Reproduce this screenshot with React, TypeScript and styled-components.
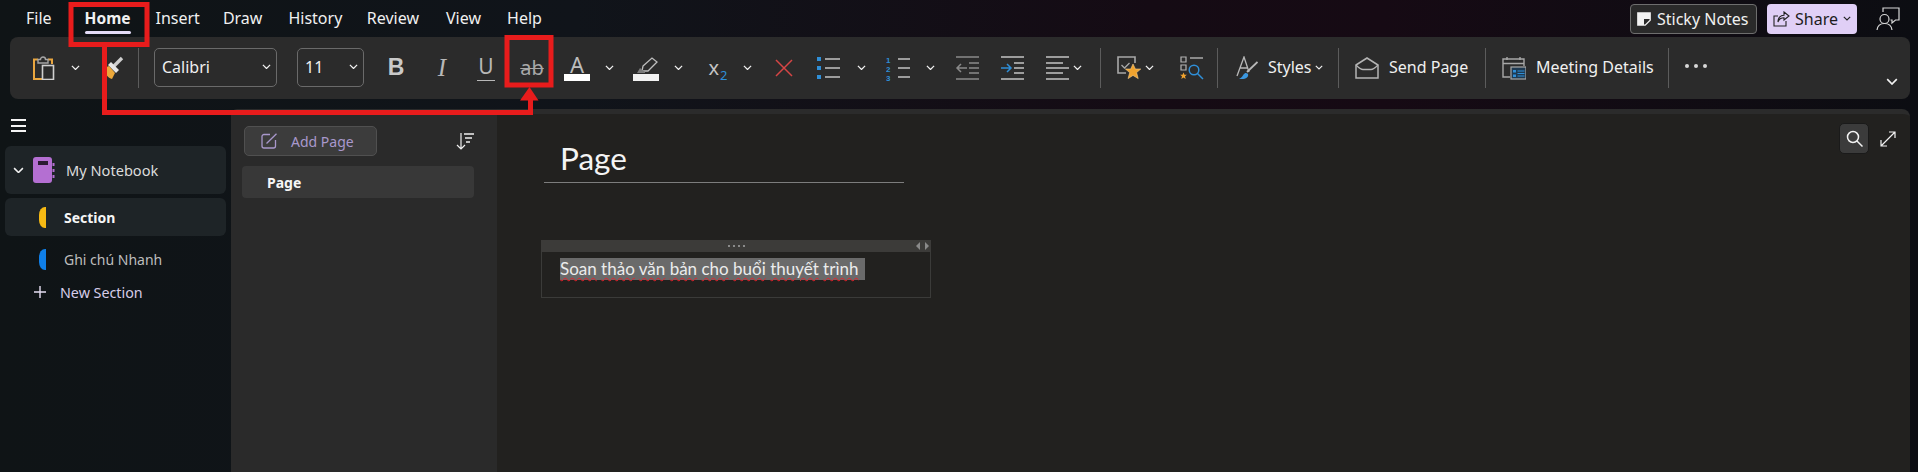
import React from 'react';
import styled, { createGlobalStyle } from 'styled-components';

const GlobalStyle = createGlobalStyle`
  html, body {
    margin: 0;
    padding: 0;
    background: #0f1315;
  }
  * {
    box-sizing: border-box;
  }
`;

const UI_FONT = `"Noto Sans", "Open Sans", sans-serif`;

const AppShell = styled.div`
  position: relative;
  width: 1918px;
  height: 472px;
  overflow: hidden;
  display: flex;
  flex-direction: column;
  font-family: ${UI_FONT};
  color: #f2f2f2;
  background: linear-gradient(90deg, #0f1416 0%, #10141a 30%, #150b14 60%, #160a14 72%, #0c0d12 100%);
`;

const MenuBar = styled.div`
  height: 37px;
  display: flex;
  align-items: center;
  flex: none;
  padding-right: 18px;
`;

const MenuItem = styled.div<{ $ml: number; $active?: boolean }>`
  position: relative;
  margin-left: ${({ $ml }) => $ml}px;
  font-size: ${({ $active }) => ($active ? 15.5 : 16)}px;
  line-height: 37px;
  height: 37px;
  font-weight: ${({ $active }) => ($active ? 700 : 400)};
  color: #f0f0f0;
  &::after {
    content: '';
    display: ${({ $active }) => ($active ? 'block' : 'none')};
    position: absolute;
    left: 0;
    right: 0;
    bottom: 3px;
    height: 3px;
    border-radius: 2px;
    background: #e3dbf7;
  }
`;

const MenuRight = styled.div`
  margin-left: auto;
  display: flex;
  align-items: center;
`;

const StickyButton = styled.div`
  width: 127px;
  height: 30px;
  display: flex;
  align-items: center;
  gap: 6px;
  padding-left: 6px;
  border: 1px solid #6e6e6e;
  border-radius: 4px;
  background: #2a2a2a;
  font-size: 16px;
  color: #f0f0f0;
  white-space: nowrap;
`;

const ShareButton = styled.div`
  width: 90px;
  height: 30px;
  margin-left: 10px;
  display: flex;
  align-items: center;
  padding-left: 6px;
  gap: 5px;
  border-radius: 4px;
  background: #e0cff6;
  font-size: 16px;
  color: #1c1c1c;
`;

const FeedbackIcon = styled.div`
  margin-left: 19px;
  width: 24px;
  height: 24px;
`;

const Ribbon = styled.div`
  position: relative;
  flex: none;
  height: 62px;
  margin: 0 8px 0 10px;
  padding-bottom: 1px;
  display: flex;
  align-items: center;
  border-radius: 8px;
  background: #2b2b2b;
`;

const Slot = styled.div<{ $ml: number; $w: number }>`
  flex: none;
  display: flex;
  align-items: center;
  justify-content: center;
  margin-left: ${({ $ml }) => $ml}px;
  width: ${({ $w }) => $w}px;
  height: 30px;
`;

const Separator = styled.div<{ $ml: number }>`
  flex: none;
  margin-left: ${({ $ml }) => $ml}px;
  width: 1px;
  height: 40px;
  background: #5c5c5c;
`;

const FontSelect = styled.div<{ $ml: number; $w: number }>`
  flex: none;
  margin-left: ${({ $ml }) => $ml}px;
  width: ${({ $w }) => $w}px;
  height: 39px;
  display: flex;
  align-items: center;
  justify-content: space-between;
  padding: 0 5px 2px 7px;
  border: 1px solid #6a6a6a;
  border-radius: 5px;
  font-size: 16px;
  color: #f0f0f0;
`;

const GlyphBold = styled.span`
  font-family: "Liberation Sans", sans-serif;
  font-weight: 700;
  font-size: 23px;
  color: #c9c9c9;
`;

const GlyphItalic = styled.span`
  font-family: "Liberation Serif", serif;
  font-style: italic;
  font-size: 25px;
  color: #b8b8b8;
`;

const GlyphUnderline = styled.span`
  font-size: 21px;
  line-height: 24px;
  color: #b8b8b8;
  border-bottom: 1.5px solid #b8b8b8;
  padding: 0 1px;
  height: 27px;
`;

const GlyphStrike = styled.span`
  font-size: 20px;
  color: #a8a8a8;
  text-decoration: line-through;
  text-decoration-thickness: 1px;
  padding: 0 2px;
`;

const SwatchTool = styled.div`
  width: 100%;
  height: 26px;
  display: flex;
  flex-direction: column;
  align-items: center;
  justify-content: flex-end;
`;

const SwatchLetter = styled.span`
  font-size: 22px;
  line-height: 18px;
  height: 19px;
  color: #bdbdbd;
`;

const SwatchBar = styled.div<{ $color: string }>`
  flex: none;
  width: 100%;
  height: 7px;
  background: ${({ $color }) => $color};
`;

const Subscript = styled.span`
  font-size: 20px;
  color: #c4c4c4;
  line-height: 24px;
  sub {
    font-size: 13px;
    color: #2f8fd8;
    line-height: 0;
    margin-left: 1px;
  }
`;

const RibbonLabel = styled.div<{ $ml: number; $w: number }>`
  flex: none;
  margin-left: ${({ $ml }) => $ml}px;
  margin-bottom: 2px;
  width: ${({ $w }) => $w}px;
  font-size: 16px;
  white-space: nowrap;
  color: #f0f0f0;
`;

const MoreDots = styled.div`
  display: flex;
  gap: 5px;
  margin-top: -3px;
  span {
    width: 4px;
    height: 4px;
    border-radius: 50%;
    background: #d8d8d8;
  }
`;

const CollapseButton = styled.div`
  position: absolute;
  right: 12px;
  bottom: 14px;
  display: flex;
`;

const Body = styled.div`
  flex: 1;
  min-height: 0;
  margin-top: 10px;
  margin-right: 8px;
  display: grid;
  grid-template-columns: 231px 266px 1fr;
`;

const Sidebar = styled.div`
  padding-left: 5px;
  position: relative;
`;

const Hamburger = styled.div`
  height: 37px;
  padding: 10px 0 0 6px;
  display: flex;
  flex-direction: column;
  gap: 3.5px;
  span {
    width: 15px;
    height: 2px;
    background: #f4f4f4;
  }
`;

const NotebookRow = styled.div`
  width: 221px;
  height: 48px;
  display: flex;
  align-items: center;
  padding-left: 8px;
  border-radius: 6px;
  background: #1e2427;
  font-size: 14.6px;
  color: #dcdcdc;
`;

const NotebookName = styled.span`
  margin-left: 11px;
`;

const NotebookIconBox = styled.div`
  margin-left: 9px;
  width: 22px;
  height: 26px;
  display: flex;
`;

const SectionRow = styled.div<{ $active?: boolean; $h: number; $mt: number }>`
  width: 221px;
  height: ${({ $h }) => $h}px;
  margin-top: ${({ $mt }) => $mt}px;
  display: flex;
  align-items: center;
  padding-left: 34px;
  border-radius: 6px;
  background: ${({ $active }) => ($active ? '#1e2427' : 'transparent')};
  font-size: 14px;
  font-weight: ${({ $active }) => ($active ? 700 : 400)};
  color: ${({ $active }) => ($active ? '#f6f6f6' : '#bdbdbd')};
`;

const SectionTab = styled.div<{ $color: string }>`
  flex: none;
  width: 7px;
  height: 21px;
  margin-right: 18px;
  border-radius: 6px 0 0 6px / 8px 0 0 8px;
  background: ${({ $color }) => $color};
`;

const NewSectionRow = styled.div`
  height: 20px;
  margin-top: 4px;
  padding-left: 29px;
  display: flex;
  align-items: center;
  gap: 14px;
  font-size: 14.3px;
  color: #d6cce8;
`;

const PagesPanel = styled.div`
  border-radius: 6px 0 0 0;
  background: #2a2a2a;
  padding: 17px 23px 0 11px;
`;

const PagesHeader = styled.div`
  display: flex;
  align-items: center;
  justify-content: space-between;
  padding-left: 2px;
`;

const AddPageButton = styled.div`
  width: 133px;
  height: 30px;
  display: flex;
  align-items: center;
  gap: 13px;
  padding-left: 16px;
  border: 1px solid #505050;
  border-radius: 5px;
  background: #3c3c3c;
  font-size: 14px;
  color: #a998cc;
`;

const SortButton = styled.div`
  width: 18px;
  height: 18px;
  display: flex;
`;

const PageRow = styled.div`
  margin-top: 10px;
  height: 32px;
  display: flex;
  align-items: center;
  padding-left: 25px;
  border-radius: 4px;
  background: #383838;
  font-size: 14px;
  font-weight: 700;
  color: #f6f6f6;
`;

const ContentPanel = styled.div`
  position: relative;
  padding: 0 0 0 44px;
  background: #22211f;
  border-top: 5px solid #2b2b2b;
  border-radius: 0 8px 0 0;
`;

const TitleWrap = styled.div`
  width: 360px;
  margin-left: 3px;
  height: 69px;
  border-bottom: 1px solid #7d7d7d;
  padding: 24px 0 0 16px;
  font-family: Lato, "Noto Sans", sans-serif;
  font-size: 31.5px;
  line-height: 40px;
  color: #f4f4f4;
`;

const NoteBox = styled.div`
  width: 390px;
  height: 58px;
  margin-top: 57px;
  border: 1px solid #3b3b39;
`;

const NoteHeader = styled.div`
  height: 12px;
  margin: -1px -1px 0;
  background: #3c3b39;
  position: relative;
  display: flex;
  align-items: center;
  justify-content: center;
  gap: 3px;
  span {
    width: 2px;
    height: 2px;
    background: #8a8a8a;
  }
`;

const NoteArrows = styled.div`
  position: absolute;
  right: 2px;
  top: 2px;
  display: flex;
  gap: 5px;
`;

const NoteText = styled.div`
  margin: 6px 0 0 18px;
  width: fit-content;
  height: 22px;
  padding-right: 7px;
  background: #6a6a6a;
  font-family: Lato, "Noto Sans", sans-serif;
  font-size: 17px;
  line-height: 22px;
  color: #ececec;
  white-space: pre;
`;

const MisspelledWord = styled.span`
  text-decoration: underline wavy #e8202a;
  text-decoration-thickness: 1.2px;
  text-underline-offset: 2px;
`;

const FloatingTools = styled.div`
  position: absolute;
  top: 9px;
  right: 14px;
  display: flex;
  align-items: center;
  gap: 11px;
`;

const SearchButton = styled.div`
  width: 30px;
  height: 31px;
  display: flex;
  align-items: center;
  justify-content: center;
  border: 1px solid #1a1a1a;
  border-radius: 5px;
  background: #3b3b3b;
`;

const Annotation = styled.svg`
  position: absolute;
  top: 0;
  left: 0;
  pointer-events: none;
`;

const Chevron = ({ size = 9, color = '#f2f2f2' }: { size?: number; color?: string }) => (
  <svg width={size} height={size * 0.6} viewBox="0 0 10 6" fill="none">
    <path d="M1 1l4 4 4-4" stroke={color} strokeWidth="1.4" />
  </svg>
);

const ClipboardIcon = () => (
  <svg width="24" height="24" viewBox="0 0 24 24" fill="none">
    <path d="M10 23H2V3.5h4M16 3.5h4V8" stroke="#e9a63f" strokeWidth="2" />
    <path d="M6 7V3.5h2.5a2.5 2.5 0 0 1 5 0H16V7z" stroke="#a5a5a5" strokeWidth="1.4" />
    <rect x="10.5" y="9.5" width="11" height="14" stroke="#cfcfcf" strokeWidth="1.6" fill="#2b2b2b" />
  </svg>
);

const BrushIcon = () => (
  <svg width="24" height="24" viewBox="0 0 24 24" fill="none">
    <path d="M22 2l-8 8" stroke="#cfcfcf" strokeWidth="3.4" />
    <path d="M11 6l8 8-3 3-8-8z" fill="#e6e6e6" />
    <path d="M4 12l5-2 6 7-3 6c-4-1-7-5-8-11z" fill="#eca83a" />
  </svg>
);

const HighlightIcon = () => (
  <svg width="26" height="17" viewBox="0 0 26 17" fill="none">
    <path d="M10 9l9-8 5 4-9 9H9z" stroke="#bdbdbd" strokeWidth="1.3" />
    <path d="M4 16l3-5 5 4v1z" fill="#7a7a7a" />
  </svg>
);

const ClearIcon = () => (
  <svg width="18" height="18" viewBox="0 0 18 18" fill="none">
    <path d="M1 1l16 16M17 1L1 17" stroke="#d64545" strokeWidth="1.5" />
  </svg>
);

const BulletsIcon = () => (
  <svg width="24" height="24" viewBox="0 0 24 24" fill="none">
    <path d="M0 1h4v4H0zM0 10h4v4H0zM0 19h4v4H0z" fill="#2f8fd8" />
    <path d="M8 3h15M8 12h15M8 21h15" stroke="#c4c4c4" strokeWidth="1.4" />
  </svg>
);

const NumberingIcon = () => (
  <svg width="24" height="28" viewBox="0 -2 24 28" fill="none">
    <g fill="#2f8fd8" fontSize="8" fontWeight="700" fontFamily="Liberation Sans, sans-serif">
      <text x="0" y="6.500">1</text>
      <text x="0" y="15.500">2</text>
      <text x="0" y="24.500">3</text>
    </g>
    <path d="M12 3h12M12 12h12M12 21h12" stroke="#c4c4c4" strokeWidth="1.4" />
  </svg>
);

const IndentIcon = ({ outdent }: { outdent?: boolean }) => (
  <svg width="24" height="24" viewBox="0 0 24 24" fill="none">
    <path
      d="M1 1h23M14 7h10M14 12h10M14 17h10M1 23h23"
      stroke={outdent ? '#8a8a8a' : '#c4c4c4'}
      strokeWidth="1.4"
    />
    {outdent ? (
      <path d="M12 12H2m4-4l-4 4 4 4" stroke="#8a8a8a" strokeWidth="1.5" />
    ) : (
      <path d="M1 12h10m-4-4l4 4-4 4" stroke="#2f8fd8" strokeWidth="1.5" />
    )}
  </svg>
);

const AlignIcon = () => (
  <svg width="24" height="24" viewBox="0 0 24 24" fill="none">
    <path d="M1 1h23M1 7h17M1 12h23M1 17h17M1 23h23" stroke="#c4c4c4" strokeWidth="1.4" />
  </svg>
);

const TagIcon = () => (
  <svg width="24" height="24" viewBox="0 0 24 24" fill="none">
    <path d="M9 17H1V1h17v6" stroke="#a8a8a8" strokeWidth="1.6" />
    <path d="M4.5 9l3 3 5-5" stroke="#a8a8a8" strokeWidth="1.3" />
    <path d="M16 8l2.4 5h5.4l-4.2 3.6 1.6 6L16 19.4l-4.9 3.2 1.6-6L8.4 13h5.300z" fill="#f0a32e" stroke="#f7cf8b" strokeWidth="0.6" />
  </svg>
);

const TagSearchIcon = () => (
  <svg width="24" height="24" viewBox="0 0 24 24" fill="none">
    <path d="M1 1h5v5H1zM1 9h5v5H1z" stroke="#b4b4b4" strokeWidth="1.2" />
    <path d="M10 2h13" stroke="#b4b4b4" strokeWidth="1.4" />
    <path d="M3.500 16.500l1 2.300h2.400l-1.900 1.500.7 2.600-2.200-1.400-2.200 1.400.7-2.600L.1 18.800h2.400z" fill="#f0a32e" />
    <circle cx="14" cy="14" r="4.800" stroke="#2f8fd8" strokeWidth="1.5" />
    <path d="M17.500 17.500L23 23" stroke="#2f8fd8" strokeWidth="1.500" />
  </svg>
);

const StylesIcon = () => (
  <svg width="22" height="24" viewBox="0 0 22 24" fill="none">
    <path d="M1 20L8 1l5 15M4.500 12h7" stroke="#b8b8b8" strokeWidth="1.3" />
    <path d="M21.500 6L11 16" stroke="#b8b8b8" strokeWidth="1.800" />
    <path d="M3 23c3 0 6 .5 8-1.500 1.500-1.500 1.500-3 .5-4-1.500-1-3-.5-4 1-1 1.500-2 3.500-4.500 4.500z" fill="#3b97df" />
  </svg>
);

const EnvelopeIcon = () => (
  <svg width="24" height="22" viewBox="0 0 24 22" fill="none">
    <path d="M1 8l11-7 11 7v13H1z" stroke="#b4b4b4" strokeWidth="1.500" />
    <path d="M1 8c3 3 5 4.500 7 4.500h8c2 0 4-1.500 7-4.500" stroke="#b4b4b4" strokeWidth="1.300" />
  </svg>
);

const CalendarIcon = () => (
  <svg width="24" height="24" viewBox="0 0 24 24" fill="none">
    <path d="M8 21H1V3h21v7M1 7.500h21M5 1v3M18 1v3" stroke="#a8a8a8" strokeWidth="1.400" />
    <rect x="9" y="11" width="15" height="12" stroke="#a8a8a8" strokeWidth="1.200" fill="#1f3a52" />
    <path d="M11 14h3v2.500h-3zM11 18.500h3V21h-3z" fill="#2f8fd8" />
    <path d="M15.500 15h7M15.500 17.500h7M15.500 20h7" stroke="#2f8fd8" strokeWidth="1.200" />
  </svg>
);

const StickyIcon = () => (
  <svg width="14" height="14" viewBox="0 0 14 14" fill="none">
    <path d="M.8.8h12.400v7.400L8.200 13.200H.8z" stroke="#f2f2f2" strokeWidth="1.300" />
    <path d="M1 1h12v6H7v6H1z" fill="#f2f2f2" />
  </svg>
);

const ShareIcon = () => (
  <svg width="17" height="16" viewBox="0 0 17 16" fill="none">
    <path d="M5 5H1v10h12v-5" stroke="#222" strokeWidth="1.100" />
    <path d="M11 1l5 4-5 4V6.800C8 6.800 6 8 5 11c0-4 2-6.500 6-6.800z" stroke="#222" strokeWidth="1.100" />
  </svg>
);

const PersonBubbleIcon = () => (
  <svg width="24" height="24" viewBox="0 0 24 24" fill="none">
    <circle cx="8.500" cy="12" r="4.500" stroke="#d8d8d8" strokeWidth="1.200" />
    <path d="M1 23c.5-4 3-6.500 7.500-6.500S15.500 19 16 23" stroke="#d8d8d8" strokeWidth="1.200" />
    <path d="M7 5V1h16v12h-3.500l-3.500 3v-3h-1.500" stroke="#d8d8d8" strokeWidth="1.200" />
  </svg>
);

const NotebookIcon = () => (
  <svg width="22" height="26" viewBox="0 0 22 26" fill="none">
    <rect x="0" y="0" width="19" height="26" rx="3" fill="#b46fd2" />
    <rect x="5" y="4" width="10" height="4" fill="#2b1b33" />
    <path d="M20.500 6v3M20.500 12v3M20.500 18v3" stroke="#b46fd2" strokeWidth="2" />
  </svg>
);

const AddPageIcon = () => (
  <svg width="17" height="16" viewBox="0 0 17 16" fill="none">
    <path d="M9 1.500H3a2 2 0 0 0-2 2V13a2 2 0 0 0 2 2h9.500a2 2 0 0 0 2-2V7" stroke="#a998cc" strokeWidth="1.300" />
    <path d="M5.500 10.500L15.500 .8" stroke="#a998cc" strokeWidth="1.300" />
  </svg>
);

const SortIcon = () => (
  <svg width="18" height="18" viewBox="0 0 18 18" fill="none">
    <path d="M5 1v16M1 13l4 4 4-4" stroke="#f0f0f0" strokeWidth="1.200" />
    <path d="M8 2h10M9 6h7M10 10h4" stroke="#f0f0f0" strokeWidth="1.300" />
  </svg>
);

const SearchIcon = () => (
  <svg width="17" height="17" viewBox="0 0 17 17" fill="none">
    <circle cx="7" cy="7" r="5.500" stroke="#f2f2f2" strokeWidth="1.500" />
    <path d="M11 11l5.500 5.500" stroke="#f2f2f2" strokeWidth="1.500" />
  </svg>
);

const ExpandIcon = () => (
  <svg width="16" height="16" viewBox="0 0 16 16" fill="none">
    <path d="M1 15L15 1M9 1h6v6M1 9v6h6" stroke="#f2f2f2" strokeWidth="1.200" />
  </svg>
);

const PlusIcon = () => (
  <svg width="12" height="12" viewBox="0 0 12 12" fill="none">
    <path d="M6 0v12M0 6h12" stroke="#e6def3" strokeWidth="1.400" />
  </svg>
);

const ArrowLeftSmall = ({ flip }: { flip?: boolean }) => (
  <svg width="4" height="8" viewBox="0 0 4 8">
    <path d={flip ? 'M0 0l4 4-4 4z' : 'M4 0L0 4l4 4z'} fill="#8a8a8a" />
  </svg>
);

const noteWords = ['Soan', 'thảo', 'văn', 'bản', 'cho', 'buổi', 'thuyết', 'trình'];

export default function App() {
  return (
    <AppShell>
      <GlobalStyle />
      <MenuBar>
        <MenuItem $ml={26}>File</MenuItem>
        <MenuItem $ml={33} $active>Home</MenuItem>
        <MenuItem $ml={25}>Insert</MenuItem>
        <MenuItem $ml={23}>Draw</MenuItem>
        <MenuItem $ml={26}>History</MenuItem>
        <MenuItem $ml={24.5}>Review</MenuItem>
        <MenuItem $ml={27}>View</MenuItem>
        <MenuItem $ml={26}>Help</MenuItem>
        <MenuRight>
          <StickyButton>
            <StickyIcon />
            Sticky Notes
          </StickyButton>
          <ShareButton>
            <ShareIcon />
            Share
            <Chevron size={8} color="#222" />
          </ShareButton>
          <FeedbackIcon>
            <PersonBubbleIcon />
          </FeedbackIcon>
        </MenuRight>
      </MenuBar>

      <Ribbon>
        <Slot $ml={22} $w={24}><ClipboardIcon /></Slot>
        <Slot $ml={11} $w={16}><Chevron /></Slot>
        <Slot $ml={17} $w={24}><BrushIcon /></Slot>
        <Separator $ml={14} />
        <FontSelect $ml={15} $w={123}>Calibri<Chevron /></FontSelect>
        <FontSelect $ml={20} $w={67}>11<Chevron /></FontSelect>
        <Slot $ml={17} $w={30}><GlyphBold>B</GlyphBold></Slot>
        <Slot $ml={16} $w={30}><GlyphItalic>I</GlyphItalic></Slot>
        <Slot $ml={14} $w={30}><GlyphUnderline>U</GlyphUnderline></Slot>
        <Slot $ml={16} $w={30}><GlyphStrike>ab</GlyphStrike></Slot>
        <Slot $ml={17} $w={26}>
          <SwatchTool>
            <SwatchLetter>A</SwatchLetter>
            <SwatchBar $color="#ffffff" />
          </SwatchTool>
        </Slot>
        <Slot $ml={11} $w={16}><Chevron /></Slot>
        <Slot $ml={16} $w={26}>
          <SwatchTool>
            <HighlightIcon />
            <SwatchBar $color="#f2f2f2" />
          </SwatchTool>
        </Slot>
        <Slot $ml={11} $w={16}><Chevron /></Slot>
        <Slot $ml={23} $w={18}><Subscript>x<sub>2</sub></Subscript></Slot>
        <Slot $ml={12} $w={16}><Chevron /></Slot>
        <Slot $ml={20} $w={18}><ClearIcon /></Slot>
        <Slot $ml={24} $w={24}><BulletsIcon /></Slot>
        <Slot $ml={12} $w={16}><Chevron /></Slot>
        <Slot $ml={17} $w={24}><NumberingIcon /></Slot>
        <Slot $ml={12} $w={16}><Chevron /></Slot>
        <Slot $ml={17} $w={24}><IndentIcon outdent /></Slot>
        <Slot $ml={21} $w={24}><IndentIcon /></Slot>
        <Slot $ml={21} $w={24}><AlignIcon /></Slot>
        <Slot $ml={0} $w={16}><Chevron /></Slot>
        <Separator $ml={15} />
        <Slot $ml={16} $w={24}><TagIcon /></Slot>
        <Slot $ml={0} $w={16}><Chevron /></Slot>
        <Slot $ml={23} $w={24}><TagSearchIcon /></Slot>
        <Separator $ml={13} />
        <Slot $ml={18} $w={22}><StylesIcon /></Slot>
        <RibbonLabel $ml={10} $w={42}>Styles</RibbonLabel>
        <Slot $ml={1} $w={16}><Chevron size={8} /></Slot>
        <Separator $ml={11} />
        <Slot $ml={16} $w={24}><EnvelopeIcon /></Slot>
        <RibbonLabel $ml={10} $w={80}>Send Page</RibbonLabel>
        <Separator $ml={16} />
        <Slot $ml={16} $w={24}><CalendarIcon /></Slot>
        <RibbonLabel $ml={10} $w={119}>Meeting Details</RibbonLabel>
        <Separator $ml={13} />
        <Slot $ml={16} $w={22}>
          <MoreDots><span /><span /><span /></MoreDots>
        </Slot>
        <CollapseButton><Chevron size={12} /></CollapseButton>
      </Ribbon>

      <Body>
        <Sidebar>
          <Hamburger><span /><span /><span /></Hamburger>
          <NotebookRow>
            <Chevron size={11} />
            <NotebookIconBox><NotebookIcon /></NotebookIconBox>
            <NotebookName>My Notebook</NotebookName>
          </NotebookRow>
          <SectionRow $active $h={38} $mt={4}>
            <SectionTab $color="#f6b913" />
            Section
          </SectionRow>
          <SectionRow $h={38} $mt={4}>
            <SectionTab $color="#0f7fe8" />
            Ghi chú Nhanh
          </SectionRow>
          <NewSectionRow>
            <PlusIcon />
            New Section
          </NewSectionRow>
        </Sidebar>

        <PagesPanel>
          <PagesHeader>
            <AddPageButton>
              <AddPageIcon />
              Add Page
            </AddPageButton>
            <SortButton><SortIcon /></SortButton>
          </PagesHeader>
          <PageRow>Page</PageRow>
        </PagesPanel>

        <ContentPanel>
          <TitleWrap>Page</TitleWrap>
          <NoteBox>
            <NoteHeader>
              <span /><span /><span /><span />
              <NoteArrows>
                <ArrowLeftSmall />
                <ArrowLeftSmall flip />
              </NoteArrows>
            </NoteHeader>
            <NoteText>
              {noteWords.map((word, i) => (
                <React.Fragment key={word}>
                  {i > 0 && ' '}
                  <MisspelledWord>{word}</MisspelledWord>
                </React.Fragment>
              ))}
            </NoteText>
          </NoteBox>
          <FloatingTools>
            <SearchButton><SearchIcon /></SearchButton>
            <ExpandIcon />
          </FloatingTools>
        </ContentPanel>
      </Body>

      <Annotation width="1918" height="472" viewBox="0 0 1918 472" fill="none">
        <rect x="71" y="4.500" width="76" height="40" stroke="#e81c1c" strokeWidth="5" />
        <rect x="507" y="37.500" width="44" height="47.500" stroke="#e81c1c" strokeWidth="5" />
        <path d="M104.500 46v66.500H530.500V98" stroke="#e81c1c" strokeWidth="5" />
        <path d="M520 100.500L529.500 87l9 13.500z" fill="#e81c1c" />
      </Annotation>
    </AppShell>
  );
}
